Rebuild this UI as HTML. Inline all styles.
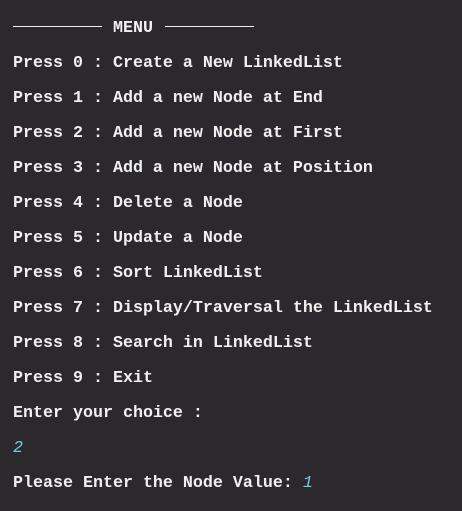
<!DOCTYPE html>
<html><head><meta charset="utf-8"><style>
html,body{margin:0;padding:0;background:#2b292d;width:462px;height:511px;overflow:hidden}
.t{position:absolute;left:13px;top:11px;font-family:"Liberation Mono",monospace;font-size:16.67px;line-height:35px;color:#f0f0f0;font-weight:bold}
.l{height:35px;white-space:pre}
.d{display:inline-block;width:89px;border-top:1.5px solid #f0f0f0;vertical-align:middle;margin-top:-3px}
.m{margin:0 2px 0 1px}
.c{color:#6fcde0;font-style:italic;font-weight:normal}
</style></head><body><div class="t"><div class="l"><span class="d"></span><span class="m"> MENU </span><span class="d"></span></div><div class="l">Press 0 : Create a New LinkedList</div><div class="l">Press 1 : Add a new Node at End</div><div class="l">Press 2 : Add a new Node at First</div><div class="l">Press 3 : Add a new Node at Position</div><div class="l">Press 4 : Delete a Node</div><div class="l">Press 5 : Update a Node</div><div class="l">Press 6 : Sort LinkedList</div><div class="l">Press 7 : Display/Traversal the LinkedList</div><div class="l">Press 8 : Search in LinkedList</div><div class="l">Press 9 : Exit</div><div class="l">Enter your choice :</div><div class="l c">2</div><div class="l">Please Enter the Node Value: <span class="c">1</span></div></div></body></html>
